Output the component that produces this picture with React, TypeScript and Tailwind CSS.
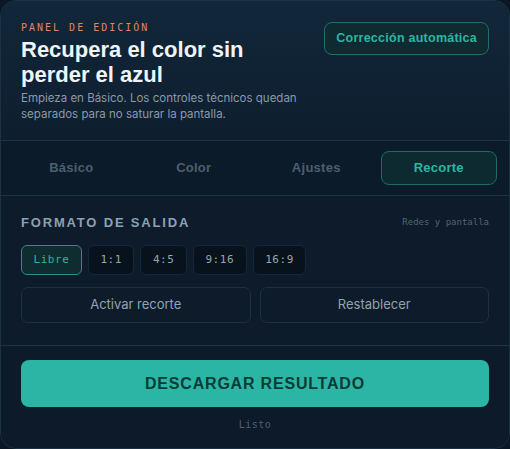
import React from "react";

const tabs = ["Básico", "Color", "Ajustes", "Recorte"];
const formats = ["Libre", "1:1", "4:5", "9:16", "16:9"];

export default function App() {
  return (
    <div className="w-[510px] h-[449px] bg-[#0b1724]">
      <div className="w-full h-full rounded-[16px] border border-[#1c3244] bg-[#0d1b2b] overflow-hidden flex flex-col">
        {/* header */}
        <div className="h-[140px] shrink-0 bg-gradient-to-b from-[#11273a] to-[#0e1e2e] border-b border-[#1d3447] flex justify-between px-[20px] pt-[20px]">
          <div className="flex flex-col">
            <div className="font-['DejaVu_Sans_Mono',monospace] text-[10px] tracking-[0.2em] text-[#e0846a] leading-[14px]">
              PANEL DE EDICIÓN
            </div>
            <h1 className="font-['Liberation_Sans',Arial,sans-serif] mt-[2px] text-[22px] font-bold leading-[25px] text-[#eef4f8] w-[260px]">
              Recupera el color sin perder el azul
            </h1>
            <p className="font-['Inter',sans-serif] mt-[3px] text-[11.5px] leading-[16px] text-[#8a9aaa] w-[300px]">
              Empieza en Básico. Los controles técnicos quedan separados para no saturar la pantalla.
            </p>
          </div>
          <button className="font-['Liberation_Sans',Arial,sans-serif] mt-[1px] h-[33px] px-[11px] rounded-[8px] border border-[#1f6f66] bg-[#0f2b31] text-[#2bb5a3] text-[12.5px] font-bold tracking-[0.02em]">
            Corrección automática
          </button>
        </div>

        {/* tabs */}
        <div className="h-[55px] shrink-0 border-b border-[#1d3447] bg-[#0c1b2a] grid grid-cols-4 gap-[6px] px-[12px] items-center">
          {tabs.map((t) =>
            t === "Recorte" ? (
              <div
                key={t}
                className="font-['Liberation_Sans',Arial,sans-serif] h-[34px] rounded-[8px] border border-[#1f6a63] bg-[#0e2a31] flex items-center justify-center text-[13px] font-bold text-[#2bb5a3] tracking-[0.02em]"
              >
                {t}
              </div>
            ) : (
              <div
                key={t}
                className="font-['Liberation_Sans',Arial,sans-serif] h-[34px] flex items-center justify-center text-[13px] font-bold text-[#4b5f70] tracking-[0.02em]"
              >
                {t}
              </div>
            )
          )}
        </div>

        {/* output format */}
        <div className="h-[150px] shrink-0 border-b border-[#1d3447] px-[20px] pt-[19px]">
          <div className="flex justify-between items-center h-[16px]">
            <div className="font-['Liberation_Sans',Arial,sans-serif] text-[13px] font-bold tracking-[0.14em] text-[#8ea1b2]">
              FORMATO DE SALIDA
            </div>
            <div className="font-['DejaVu_Sans_Mono',monospace] text-[9px] text-[#4f6576]">
              Redes y pantalla
            </div>
          </div>
          <div className="mt-[14px] flex gap-[6px]">
            {formats.map((f) =>
              f === "Libre" ? (
                <div
                  key={f}
                  className="font-['DejaVu_Sans_Mono',monospace] h-[30px] px-[11.5px] rounded-[6px] border border-[#2a8f85] bg-[#0f2c31] flex items-center text-[11px] text-[#2bb5a3] tracking-[0.05em]"
                >
                  {f}
                </div>
              ) : (
                <div
                  key={f}
                  className="font-['DejaVu_Sans_Mono',monospace] h-[30px] px-[11.5px] rounded-[6px] border border-[#15283a] bg-[#08121d] flex items-center text-[11px] text-[#97a5b2] tracking-[0.05em]"
                >
                  {f}
                </div>
              )
            )}
          </div>
          <div className="mt-[12px] grid grid-cols-2 gap-[9px]">
            <button className="font-['Inter',sans-serif] h-[36px] rounded-[7px] border border-[#1c3142] text-[13px] text-[#93a3b2]">
              Activar recorte
            </button>
            <button className="font-['Inter',sans-serif] h-[36px] rounded-[7px] border border-[#1c3142] text-[13px] text-[#93a3b2]">
              Restablecer
            </button>
          </div>
        </div>

        {/* footer */}
        <div className="flex-1 px-[20px] pt-[14px] flex flex-col bg-[#0c1a29]">
          <button className="font-['Liberation_Sans',Arial,sans-serif] h-[47px] rounded-[8px] bg-[#2ab5a5] text-[16px] font-bold text-[#0b3b37] tracking-[0.05em]">
            DESCARGAR RESULTADO
          </button>
          <div className="font-['DejaVu_Sans_Mono',monospace] mt-[10px] text-center text-[10px] text-[#4d6070] tracking-[0.05em]">
            Listo
          </div>
        </div>
      </div>
    </div>
  );
}
